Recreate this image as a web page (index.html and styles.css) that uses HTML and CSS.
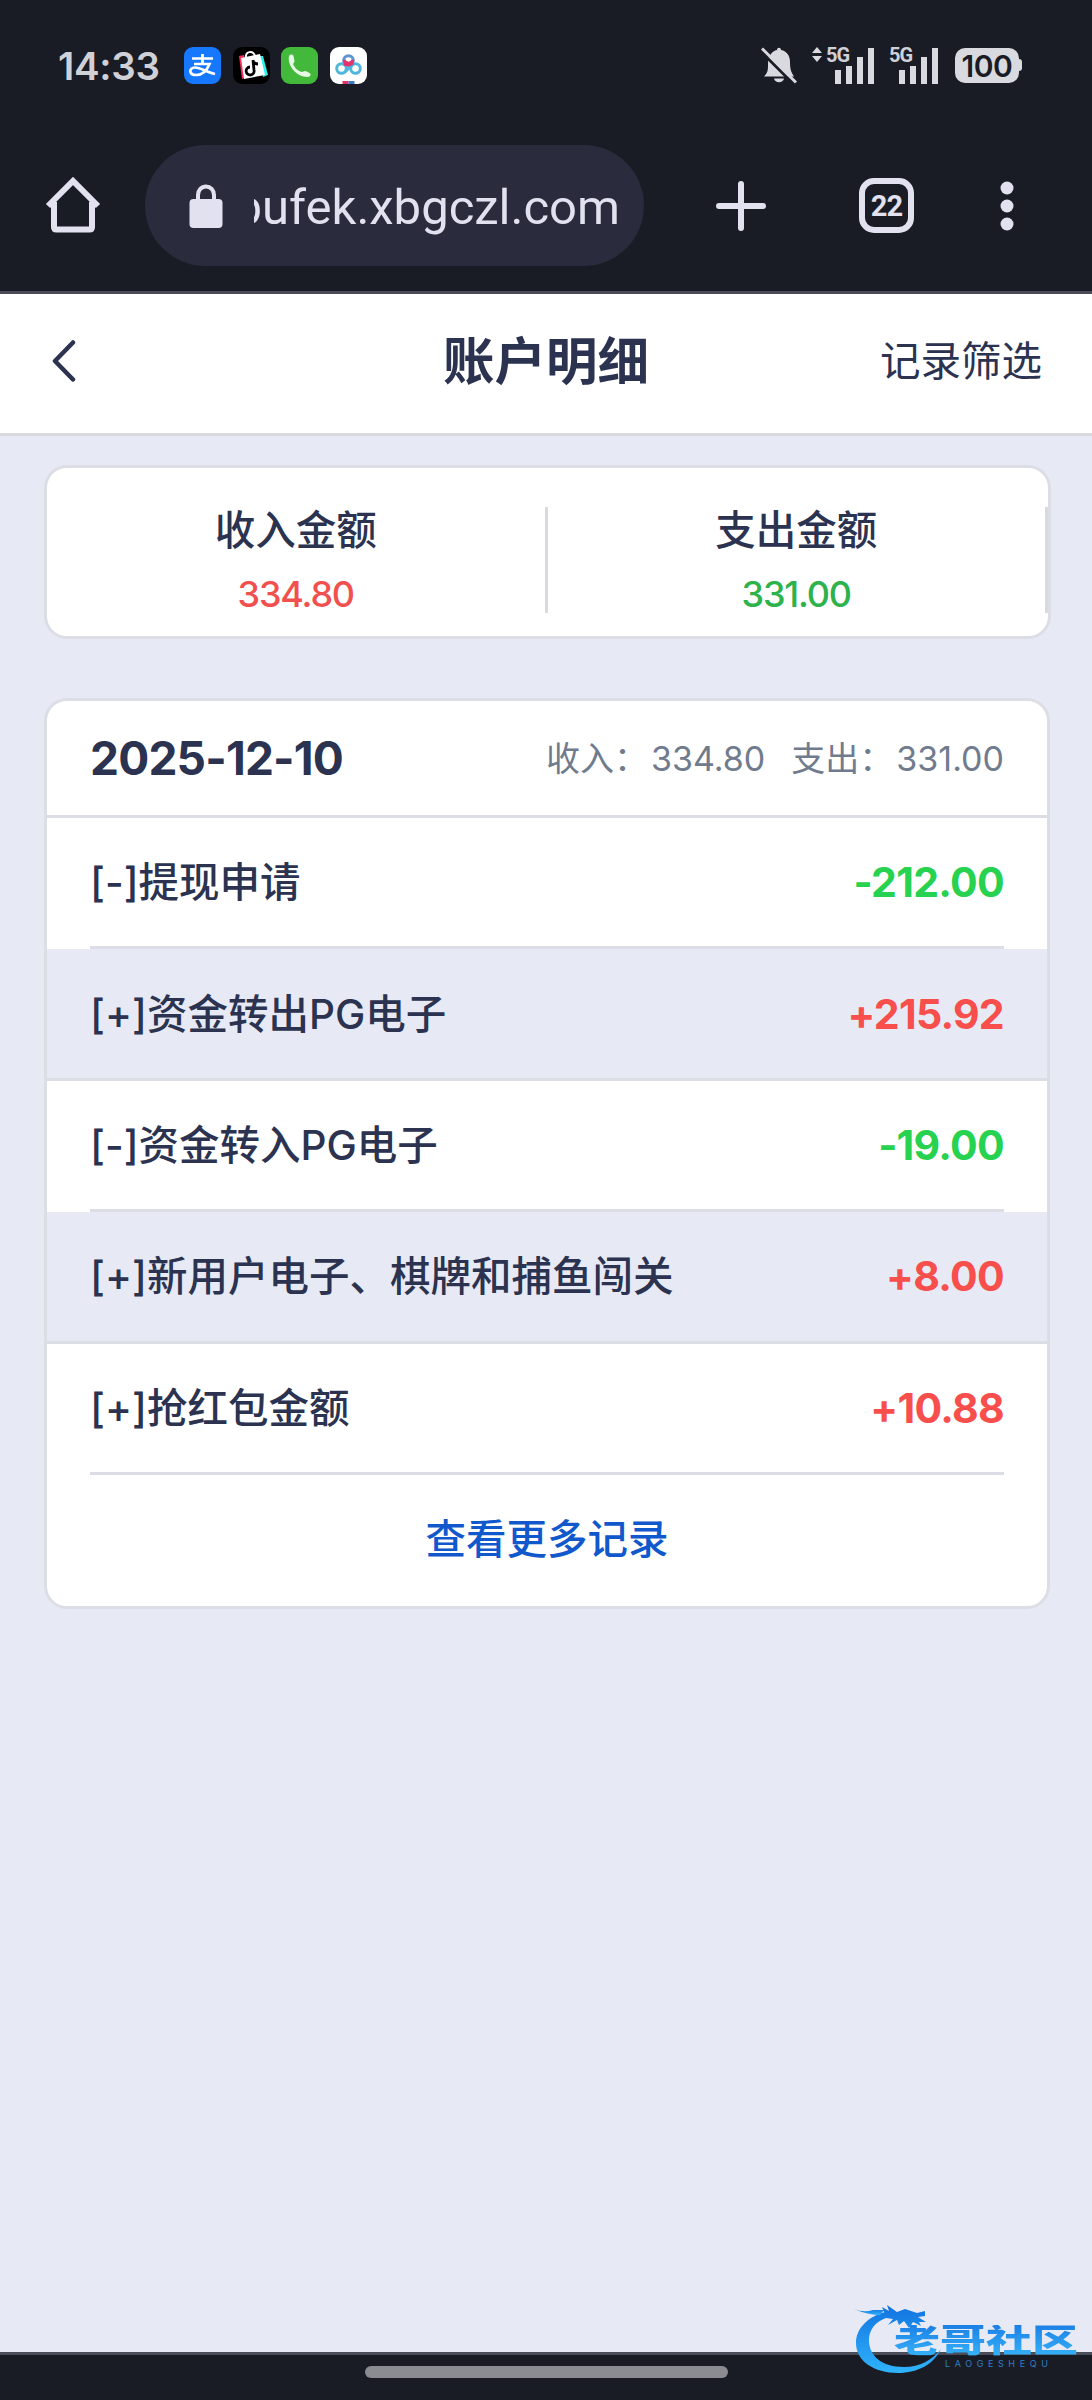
FILE: index.html
```html
<!DOCTYPE html>
<html lang="zh-CN">
<head>
    <meta charset="UTF-8">
    <meta name="viewport" content="width=device-width, initial-scale=1.0">
    <title>账户明细</title>
    <link rel="stylesheet" href="styles.css">
</head>
<body>
    <div class="status">
        <span class="time">14:33</span>
        <div class="apps">
            <svg width="37" height="37" viewBox="0 0 37 37">
                <rect width="37" height="37" rx="9" fill="#1677ff"/>
                <path d="M8 11.500h21M18.500 7v10M10 17h15.500c-2.500 6-7 11-13 11-8 0-8-7.500-1.500-7.500 6 0 12 5 20 6.500" fill="none" stroke="#fff" stroke-width="2.700"/>
            </svg>
            <svg width="37" height="37" viewBox="0 0 37 37">
                <rect width="37" height="37" rx="9" fill="#000"/>
                <path d="M6 9l5-1 1 23-3 1z" fill="#fe2c55"/>
                <path d="M27 9h3l5 19-5 2z" fill="#25f4ee"/>
                <path d="M8 11l19-4 5 21-21 4z" fill="#fff"/>
                <path d="M13 11c-1-7 7-8 9-2" fill="none" stroke="#fff" stroke-width="2"/>
                <path d="M20 13l1 10a4 4 0 1 1-4-3M20 14c1 3 3 3 5 3" fill="none" stroke="#000" stroke-width="2.800"/>
            </svg>
            <svg width="37" height="37" viewBox="0 0 37 37">
                <rect width="37" height="37" rx="9" fill="#43b93c"/>
                <path d="M8 9c1-2 4-2 4.500 0l1 5c0 2-2 2-1 4 2 4 5 6 8 7 2 0 2-1 4-1l4 2c2 1 1 4-2 4C16 30 6 19 8 9z" fill="#e8f8e6"/>
            </svg>
            <svg width="37" height="37" viewBox="0 0 37 37">
                <rect width="37" height="37" rx="9" fill="#fff"/>
                <circle cx="11.500" cy="21.500" r="4.800" fill="none" stroke="#4fb6dc" stroke-width="3"/>
                <circle cx="25.500" cy="21.500" r="4.800" fill="none" stroke="#4fb6dc" stroke-width="3"/>
                <path d="M15 25l7-7" stroke="#4fb6dc" stroke-width="3"/>
                <circle cx="18.500" cy="13.500" r="4.800" fill="none" stroke="#5d94cf" stroke-width="3"/>
                <path d="M14 13a4.800 4.800 0 0 0 9 0M14 17l4 1 5-2" fill="none" stroke="#e5316b" stroke-width="3"/>
                <path d="M12.500 37v-3h6v3z" fill="#e5316b"/>
                <path d="M18.500 37v-3h6v3z" fill="#3b7cc4"/>
            </svg>
        </div>
        <div class="signals">
            <svg width="36" height="37" viewBox="0 0 36 37">
                <path d="M3 29.500c4-4 4-7 4-12C7 9 11 4 16 3c0-3 4-3 4 0 6 1 9 6 9 12 0 7 1 10 4 14.500z" fill="#d9dadf"/>
                <path d="M13 31.500h10c-1 5-9 5-10 0z" fill="#d9dadf"/>
                <path d="M-1 3.500l34 34" stroke="#1a1c25" stroke-width="3"/>
                <path d="M1 1.500l34 34" stroke="#d9dadf" stroke-width="3"/>
            </svg>
            <div class="net arrows">
                <svg width="62" height="38" viewBox="0 0 62 38">
                    <path d="M5 0l5 6H0zM5 15l5-6H0z" fill="#d9dadf"/>
                    <path d="M23 23h6v14h-6zM34 19h6v18h-6zM45 10h6v27h-6zM56 1h6v36h-6z" fill="#d9dadf"/>
                </svg>
                <b>5G</b>
            </div>
            <div class="net">
                <svg width="49" height="38" viewBox="13 0 49 38">
                    <path d="M23 23h6v14h-6zM34 19h6v18h-6zM45 10h6v27h-6zM56 1h6v36h-6z" fill="#d9dadf"/>
                </svg>
                <b>5G</b>
            </div>
            <div class="battery">100</div>
        </div>
    </div>
    <div class="browser">
        <svg class="home" width="56" height="56" viewBox="0 0 56 56">
            <path d="M3 29L28 4l25 25M9 25v25q0 2.500 2.500 2.500h33q2.500 0 2.500-2.500V25" fill="none" stroke="#e1e1ef" stroke-width="6"/>
        </svg>
        <div class="address">
            <svg width="34" height="44" viewBox="0 0 34 44">
                <rect x="0.500" y="15" width="33" height="29" rx="4" fill="#e1e1ef"/>
                <path d="M9 16v-5a8 8.500 0 0 1 16 0v5" fill="none" stroke="#e1e1ef" stroke-width="4"/>
            </svg>
            <div class="url"><span>bufek.xbgczl.com</span></div>
        </div>
        <svg class="plus" width="50" height="50" viewBox="0 0 50 50">
            <path d="M25 3v44M3 25h44" stroke="#e1e1ef" stroke-width="6" stroke-linecap="round"/>
        </svg>
        <div class="tabs">22</div>
        <svg class="more" width="14" height="50" viewBox="0 0 14 50">
            <g fill="#e1e1ef"><circle cx="7" cy="7" r="6.500"/><circle cx="7" cy="25" r="6.500"/><circle cx="7" cy="43" r="6.500"/></g>
        </svg>
    </div>

    <div class="header">
        <svg class="back" width="24" height="42" viewBox="0 0 24 42">
            <path d="M21 2.500L3 21l18 18.500" fill="none" stroke="#2b3350" stroke-width="4.500" stroke-linecap="round" stroke-linejoin="round"/>
        </svg>
        <h1>账户明细</h1>
        <span class="filter">记录筛选</span>
    </div>

    <div class="main">
        <div class="total">
            <div class="total-item">
                <p>收入金额</p>
                <span class="red">334.80</span>
            </div>
            <div class="total-item">
                <p>支出金额</p>
                <span class="green">331.00</span>
            </div>
        </div>

        <div class="day">
            <div class="day-head">
                <b>2025-12-10</b>
                <div class="day-sum"><span>收入：<i>334.80</i></span><span>支出：<i>331.00</i></span></div>
            </div>
            <div class="row"><span>[-]提现申请</span><b class="minus">-212.00</b></div>
            <div class="row gray"><span>[+]资金转出PG电子</span><b class="add">+215.92</b></div>
            <div class="row"><span>[-]资金转入PG电子</span><b class="minus">-19.00</b></div>
            <div class="row gray"><span>[+]新用户电子、棋牌和捕鱼闯关</span><b class="add">+8.00</b></div>
            <div class="row"><span>[+]抢红包金额</span><b class="add">+10.88</b></div>
            <a class="all">查看更多记录</a>
        </div>
    </div>

    <div class="navbar"><div class="pill"></div></div>

    <div class="mark">
        <svg width="94" height="74" viewBox="0 0 94 74">
            <defs>
                <linearGradient id="blue" x1="0" y1="0" x2="0" y2="1">
                    <stop offset="0" stop-color="#1273e0"/>
                    <stop offset="1" stop-color="#2fb4fb"/>
                </linearGradient>
            </defs>
            <path d="M32 7C14 12 3 24 3 38c0 18 18 30 42 30 20 0 36-9 43-24-9 11-21 18-37 18-22 0-35-11-35-27 0-10 6-18 17-22l7 1-5 6 9-5 2 5 5-4 5 7 4-6 8 4-2-4h7l-8-5 7-1v-5l-8 2-12-4-8 3-10-7 2 6-7-4 2 5z" fill="url(#blue)"/>
            <path d="M1 4q10 4 19 1h11l-4 5q-12 0-26-6z" fill="url(#blue)"/>
        </svg>
        <div class="mark-name">老哥社区</div>
        <div class="mark-sub">LAOGESHEQU</div>
    </div>
</body>
</html>
```
FILE: styles.css
```css
*{
    box-sizing: border-box;
    margin: 0;
    padding: 0;
}
body{
    height: 2400px;
    display: flex;
    flex-direction: column;
    background-color: #e7eaf4;
    color: #2b3350;
    font-family: Inter, "Noto Sans CJK SC", sans-serif;
    position: relative;
    overflow: hidden;
}
svg{
    display: block;
    flex-shrink: 0;
}
i{
    font-style: normal;
}
/* 状态栏 */
.status{
    height: 131px;
    background-color: #1a1c25;
    display: flex;
    align-items: center;
    padding: 0 73px 0 58px;
    color: #d0d1d7;
}
.time{
    font-size: 38.500px;
    font-weight: 600;
    letter-spacing: -0.300px;
    width: 126px;
}
.apps{
    display: flex;
    gap: 11.500px;
}
.signals{
    display: flex;
    align-items: center;
    margin-left: auto;
}
.net{
    position: relative;
    margin-left: 15px;
}
.net b{
    position: absolute;
    left: 0;
    top: -3px;
    font: bold 20px/22px Roboto, sans-serif;
    letter-spacing: -1px;
}
.net.arrows b{
    left: 14px;
}
.battery{
    width: 64px;
    height: 35px;
    margin-left: 17px;
    border-radius: 10px;
    background-color: #d9dadf;
    color: #1a1c25;
    font-size: 30px;
    font-weight: 600;
    letter-spacing: -0.500px;
    line-height: 36px;
    text-align: center;
    position: relative;
}
.battery::after{
    content: "";
    position: absolute;
    right: -3px;
    top: 11px;
    width: 3px;
    height: 12px;
    border-radius: 0 3px 3px 0;
    background-color: #d9dadf;
}
/* 浏览器地址栏 */
.browser{
    height: 163px;
    background-color: #1a1c25;
    border-bottom: 3px solid #4a4d58;
    display: flex;
    align-items: flex-start;
    padding-left: 45px;
}
.home{
    margin-top: 46px;
}
.address{
    width: 499px;
    height: 121px;
    margin: 14px 0 0 44px;
    border-radius: 61px;
    background-color: #2a2b3c;
    display: flex;
    align-items: center;
    padding-left: 44px;
}
.url{
    width: 366px;
    height: 70px;
    margin: 4px 0 0 31px;
    overflow: hidden;
    display: flex;
    justify-content: flex-end;
    color: #e1e1ef;
    font: 49px/70px Roboto, sans-serif;
}
.plus{
    margin: 50px 0 0 72px;
}
.tabs{
    width: 55px;
    height: 55px;
    margin: 47px 0 0 93px;
    border: 6px solid #e1e1ef;
    border-radius: 15px;
    color: #e1e1ef;
    font: bold 29px/44px Roboto, sans-serif;
    letter-spacing: -1px;
    text-align: center;
}
.more{
    margin: 50px 0 0 86px;
}
/* 页头 */
.header{
    height: 142px;
    background-color: #fff;
    border-bottom: 3px solid #d8dae0;
    display: flex;
    align-items: center;
    justify-content: space-between;
    padding: 0 50px 5px 52px;
}
.back{
    margin-right: 136px;
}
.header h1{
    font-size: 51.500px;
    line-height: 60px;
    font-weight: 700;
}
.filter{
    font-size: 40.500px;
    padding-bottom: 5px;
}
/* 汇总 */
.main{
    padding: 29px 42px 0 44px;
}
.total{
    height: 174px;
    margin-right: -1px;
    background-color: #fff;
    border: 3px solid #dcdee5;
    border-radius: 23px;
    display: flex;
    padding-top: 39px;
}
.total-item{
    flex: 1;
    height: 106px;
    border-right: 3px solid #d8dae0;
    text-align: center;
}
.total-item p{
    font-size: 40.500px;
    line-height: 48px;
    font-weight: 450;
}
.total-item span{
    display: block;
    font-size: 36px;
    font-weight: 450;
    line-height: 78px;
    letter-spacing: -1.200px;
}
.red{
    color: #f1504e;
}
.green{
    color: #2db24c;
}
/* 明细列表 */
.day{
    margin-top: 59px;
    background-color: #fff;
    border: 3px solid #dcdee5;
    border-radius: 23px;
    overflow: hidden;
}
.day-head{
    height: 117px;
    border-bottom: 3px solid #dcdee5;
    display: flex;
    align-items: center;
    justify-content: space-between;
    padding: 0 43px;
}
.day-head b{
    font-size: 46px;
    letter-spacing: -0.800px;
}
.day-sum{
    display: flex;
    gap: 26px;
    padding-bottom: 4px;
    font-size: 34px;
    color: #717b8e;
}
.day-sum i{
    margin-left: 3px;
}
.row{
    height: 131.400px;
    margin: 0 43px;
    border-bottom: 3px solid #dcdee5;
    display: flex;
    align-items: center;
    justify-content: space-between;
    font-size: 40.500px;
    font-weight: 450;
}
.row.gray{
    margin: 0;
    padding: 0 43px;
    background-color: #e7eaf4;
}
.row span{
    padding-bottom: 5px;
}
.row b{
    font-size: 41px;
    letter-spacing: -0.700px;
}
.add{
    color: #f84e4c;
}
.minus{
    color: #26d24f;
}
.all{
    display: block;
    height: 131px;
    line-height: 129px;
    text-align: center;
    font-size: 40.500px;
    font-weight: 450;
    color: #1058cc;
}
/* 底部导航条 */
.navbar{
    height: 48px;
    margin-top: auto;
    background-color: #1a1c25;
    border-top: 3px solid #4a4d58;
}
.pill{
    width: 363px;
    height: 12px;
    margin: 11px auto 0;
    border-radius: 6px;
    background-color: #8b8c91;
}
/* 水印 */
.mark{
    position: absolute;
    left: 853px;
    top: 2305px;
}
.mark-name{
    position: absolute;
    left: 41px;
    top: 20px;
    white-space: nowrap;
    font-size: 46px;
    line-height: 44px;
    font-weight: 900;
    background: linear-gradient(#1c7fe6,#35b2f8);
    -webkit-background-clip: text;
    color: transparent;
    transform: scaleY(0.700);
    transform-origin: 0 0;
}
.mark-sub{
    position: absolute;
    left: 92px;
    top: 53px;
    font-size: 9px;
    line-height: 11px;
    letter-spacing: 4.600px;
    color: #2f7fc4;
}
```
